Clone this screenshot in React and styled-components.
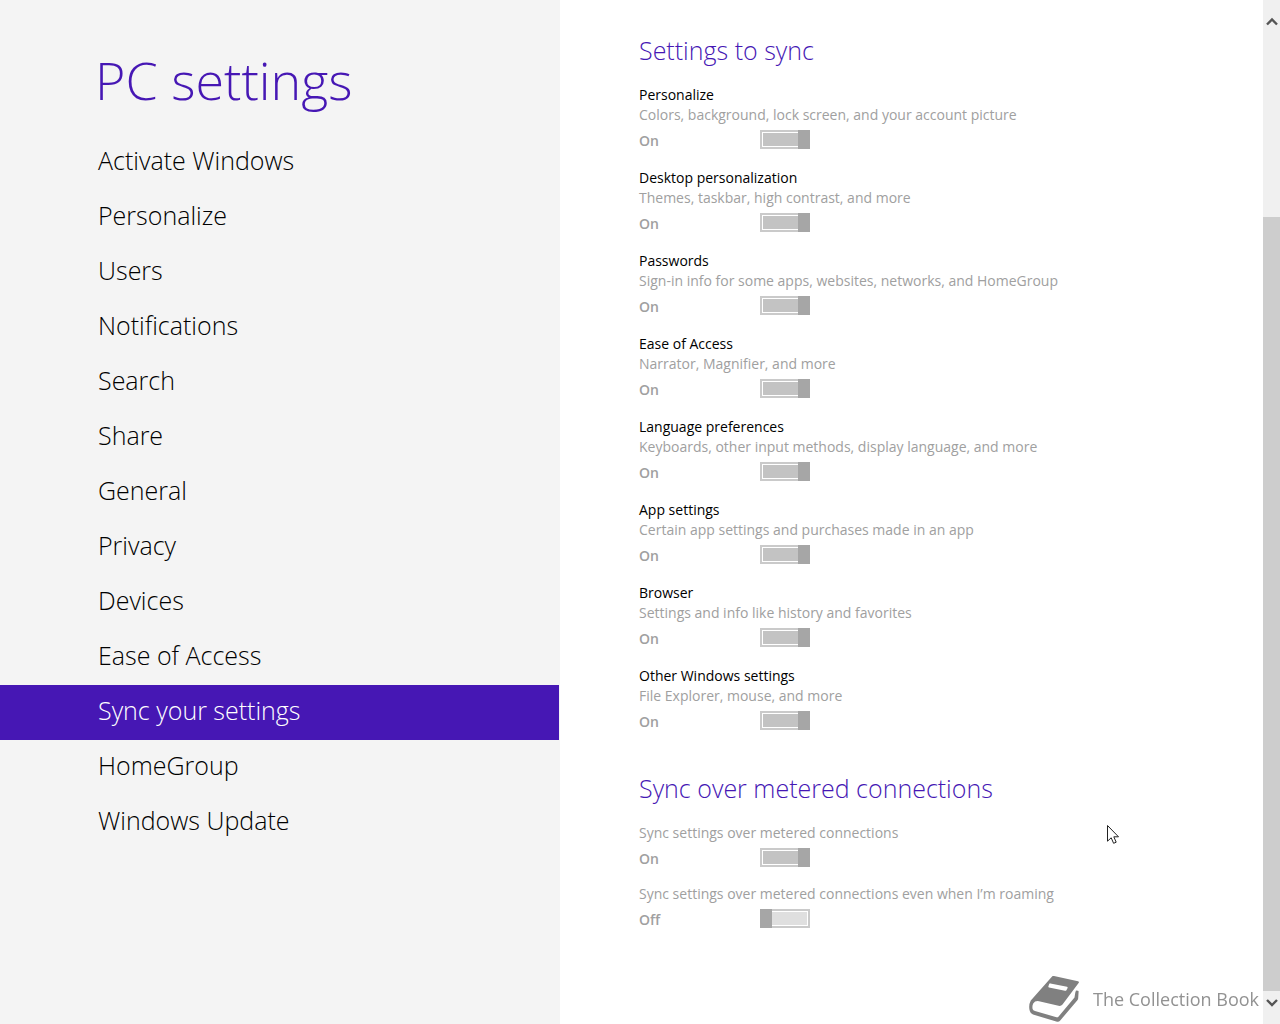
import React, { useState } from 'react';
import styled, { createGlobalStyle, css } from 'styled-components';

const GlobalStyle = createGlobalStyle`
  * {
    box-sizing: border-box;
  }
  body {
    margin: 0;
    background: #ffffff;
    font-family: 'Open Sans', 'Noto Sans', sans-serif;
  }
`;

const Page = styled.div`
  display: flex;
  min-height: 100vh;
`;

const Sidebar = styled.aside`
  flex: 0 0 43.75%;
  background: #f4f4f4;
`;

const PageTitle = styled.h1`
  margin: 0;
  padding: 45px 0 20px 95px;
  font-size: 52px;
  line-height: 70px;
  font-weight: 300;
  color: #4617b4;
`;

const Nav = styled.nav`
  display: flex;
  flex-direction: column;
  padding-right: 1px;
`;

const NavLink = styled.a`
  padding: 0 20px 4px 98px;
  font-size: 25px;
  line-height: 51px;
  font-weight: 300;
  color: #000000;
  text-decoration: none;
  ${props =>
    props.$active &&
    css`
      background: #4617b4;
      color: #ffffff;
    `}
`;

const Content = styled.main`
  flex: 1;
  min-width: 0;
  display: flex;
  flex-direction: column;
  gap: 37px;
  padding: 32px 20px 90px 79px;
`;

const Section = styled.section`
  display: flex;
  flex-direction: column;
  gap: 17px;
`;

const SectionTitle = styled.h2`
  margin: 0;
  font-size: 25px;
  line-height: 36px;
  font-weight: 300;
  color: #4617b4;
`;

const SettingList = styled.div`
  display: flex;
  flex-direction: column;
  gap: ${props => props.$gap}px;
`;

const SettingLabel = styled.label`
  display: block;
  font-size: 14px;
  line-height: 20px;
  color: #000000;
`;

const Description = styled.span`
  display: block;
  color: #a0a0a0;
`;

const SettingControl = styled.div`
  display: flex;
  align-items: flex-start;
  margin-top: 5px;
`;

const Status = styled.span`
  width: 121px;
  font-size: 14px;
  line-height: 22px;
  font-weight: 600;
  color: #a0a0a0;
`;

const Switch = styled.input`
  appearance: none;
  display: flex;
  width: 50px;
  height: 19px;
  margin: 0;
  padding: 1px;
  border: 2px solid #cacaca;
  background: #dfdfdf content-box;
  &::before {
    content: '';
    width: 12px;
    margin: -3px;
    background: #a6a6a6;
  }
  &:checked {
    justify-content: flex-end;
    background-color: #c3c3c3;
  }
`;

const ScrollBar = styled.div`
  position: sticky;
  top: 0;
  flex: 0 0 17px;
  height: 100vh;
  display: flex;
  flex-direction: column;
  background: #f0f0f0;
`;

const ScrollButton = styled.button`
  display: flex;
  justify-content: center;
  align-items: ${props => (props.$down ? 'flex-start' : 'flex-end')};
  height: 33px;
  padding: 7px 0;
  border: 0;
  background: transparent;
`;

const ScrollTrack = styled.div`
  flex: 1;
  display: flex;
  flex-direction: column;
  &::before {
    content: '';
    flex: 5;
  }
`;

const ScrollThumb = styled.div`
  flex: 21;
  background: #cdcdcd;
`;

const Watermark = styled.div`
  position: fixed;
  right: 21px;
  bottom: 2px;
  display: flex;
  align-items: center;
  gap: 14px;
  font-size: 18px;
  line-height: 24px;
  color: #929292;
`;

const Pointer = styled.svg`
  position: fixed;
  left: 1107px;
  top: 825px;
  pointer-events: none;
`;

const pages = [
  'Activate Windows',
  'Personalize',
  'Users',
  'Notifications',
  'Search',
  'Share',
  'General',
  'Privacy',
  'Devices',
  'Ease of Access',
  'Sync your settings',
  'HomeGroup',
  'Windows Update',
];

const syncSettings = [
  { id: 'personalize', title: 'Personalize', text: 'Colors, background, lock screen, and your account picture' },
  { id: 'desktop', title: 'Desktop personalization', text: 'Themes, taskbar, high contrast, and more' },
  { id: 'passwords', title: 'Passwords', text: 'Sign-in info for some apps, websites, networks, and HomeGroup' },
  { id: 'access', title: 'Ease of Access', text: 'Narrator, Magnifier, and more' },
  { id: 'language', title: 'Language preferences', text: 'Keyboards, other input methods, display language, and more' },
  { id: 'apps', title: 'App settings', text: 'Certain app settings and purchases made in an app' },
  { id: 'browser', title: 'Browser', text: 'Settings and info like history and favorites' },
  { id: 'other', title: 'Other Windows settings', text: 'File Explorer, mouse, and more' },
];

const meteredSettings = [
  { id: 'metered', text: 'Sync settings over metered connections' },
  { id: 'roaming', text: 'Sync settings over metered connections even when I’m roaming', off: true },
];

function Setting({ id, title, text, off }) {
  const [on, setOn] = useState(!off);

  return (
    <div>
      <SettingLabel htmlFor={id}>
        {title}
        <Description>{text}</Description>
      </SettingLabel>
      <SettingControl>
        <Status>{on ? 'On' : 'Off'}</Status>
        <Switch
          id={id}
          type="checkbox"
          role="switch"
          checked={on}
          onChange={e => setOn(e.target.checked)}
        />
      </SettingControl>
    </div>
  );
}

function Chevron({ down }) {
  return (
    <svg width="12" height="9" viewBox="0 0 12 9" fill="none" stroke="#555555" strokeWidth="2.4">
      <path d={down ? 'M1 2L6 7L11 2' : 'M1 7.5L6 2.5L11 7.5'} />
    </svg>
  );
}

function BookIcon() {
  return (
    <svg width="50" height="46" viewBox="0 0 50 46">
      <path
        fill="#808080"
        d="M23.3 0.2Q24 -0.2 25 0.1L49 5.2Q50.6 5.7 49.6 7L33.5 28.5Q32 30.4 29.5 29.8L10 25.2Q6 24.6 4.2 27.5Q3 30 3.6 33Q4 34.4 6 35L27.5 41.2Q28.8 41.5 29.6 40.4L45.5 21.5L46.3 16.5L47 14.5L49 14.8Q49.8 15 49.6 16L49.2 22Q49.2 23.2 48.4 24.2L31 44.8Q29.8 46.2 28 45.7L4 38.6Q1.6 37.8 0.8 35Q-0.8 29.5 1.8 24.6Z"
      />
      <path fill="#ffffff" d="M21.4 7.4L38 10.7Q39 11 38.6 12L37.4 14.2Q37 15 36 14.8L20 11.5Q19 11.2 19.4 10.2L20.2 8Q20.6 7.2 21.4 7.4Z" />
    </svg>
  );
}

function App() {
  const [active, setActive] = useState('Sync your settings');

  return (
    <>
      <GlobalStyle />
      <Page>
        <Sidebar>
          <PageTitle>PC settings</PageTitle>
          <Nav>
            {pages.map(page => (
              <NavLink key={page} href="#" $active={page === active} onClick={() => setActive(page)}>
                {page}
              </NavLink>
            ))}
          </Nav>
        </Sidebar>
        <Content>
          <Section>
            <SectionTitle>Settings to sync</SectionTitle>
            <SettingList $gap={16}>
              {syncSettings.map(item => (
                <Setting key={item.id} {...item} />
              ))}
            </SettingList>
          </Section>
          <Section>
            <SectionTitle>Sync over metered connections</SectionTitle>
            <SettingList $gap={14}>
              {meteredSettings.map(item => (
                <Setting key={item.id} {...item} />
              ))}
            </SettingList>
          </Section>
        </Content>
        <ScrollBar>
          <ScrollButton aria-label="Scroll up">
            <Chevron />
          </ScrollButton>
          <ScrollTrack>
            <ScrollThumb />
          </ScrollTrack>
          <ScrollButton aria-label="Scroll down" $down>
            <Chevron down />
          </ScrollButton>
        </ScrollBar>
      </Page>
      <Watermark>
        <BookIcon />
        The Collection Book
      </Watermark>
      <Pointer width="12" height="19" viewBox="0 0 12 19">
        <path
          d="M0.5 0.5V16.2L4.2 12.8L6.6 18.3L9.2 17.2L6.8 11.8H11.5Z"
          fill="#ffffff"
          stroke="#222222"
        />
      </Pointer>
    </>
  );
}

export default App;
